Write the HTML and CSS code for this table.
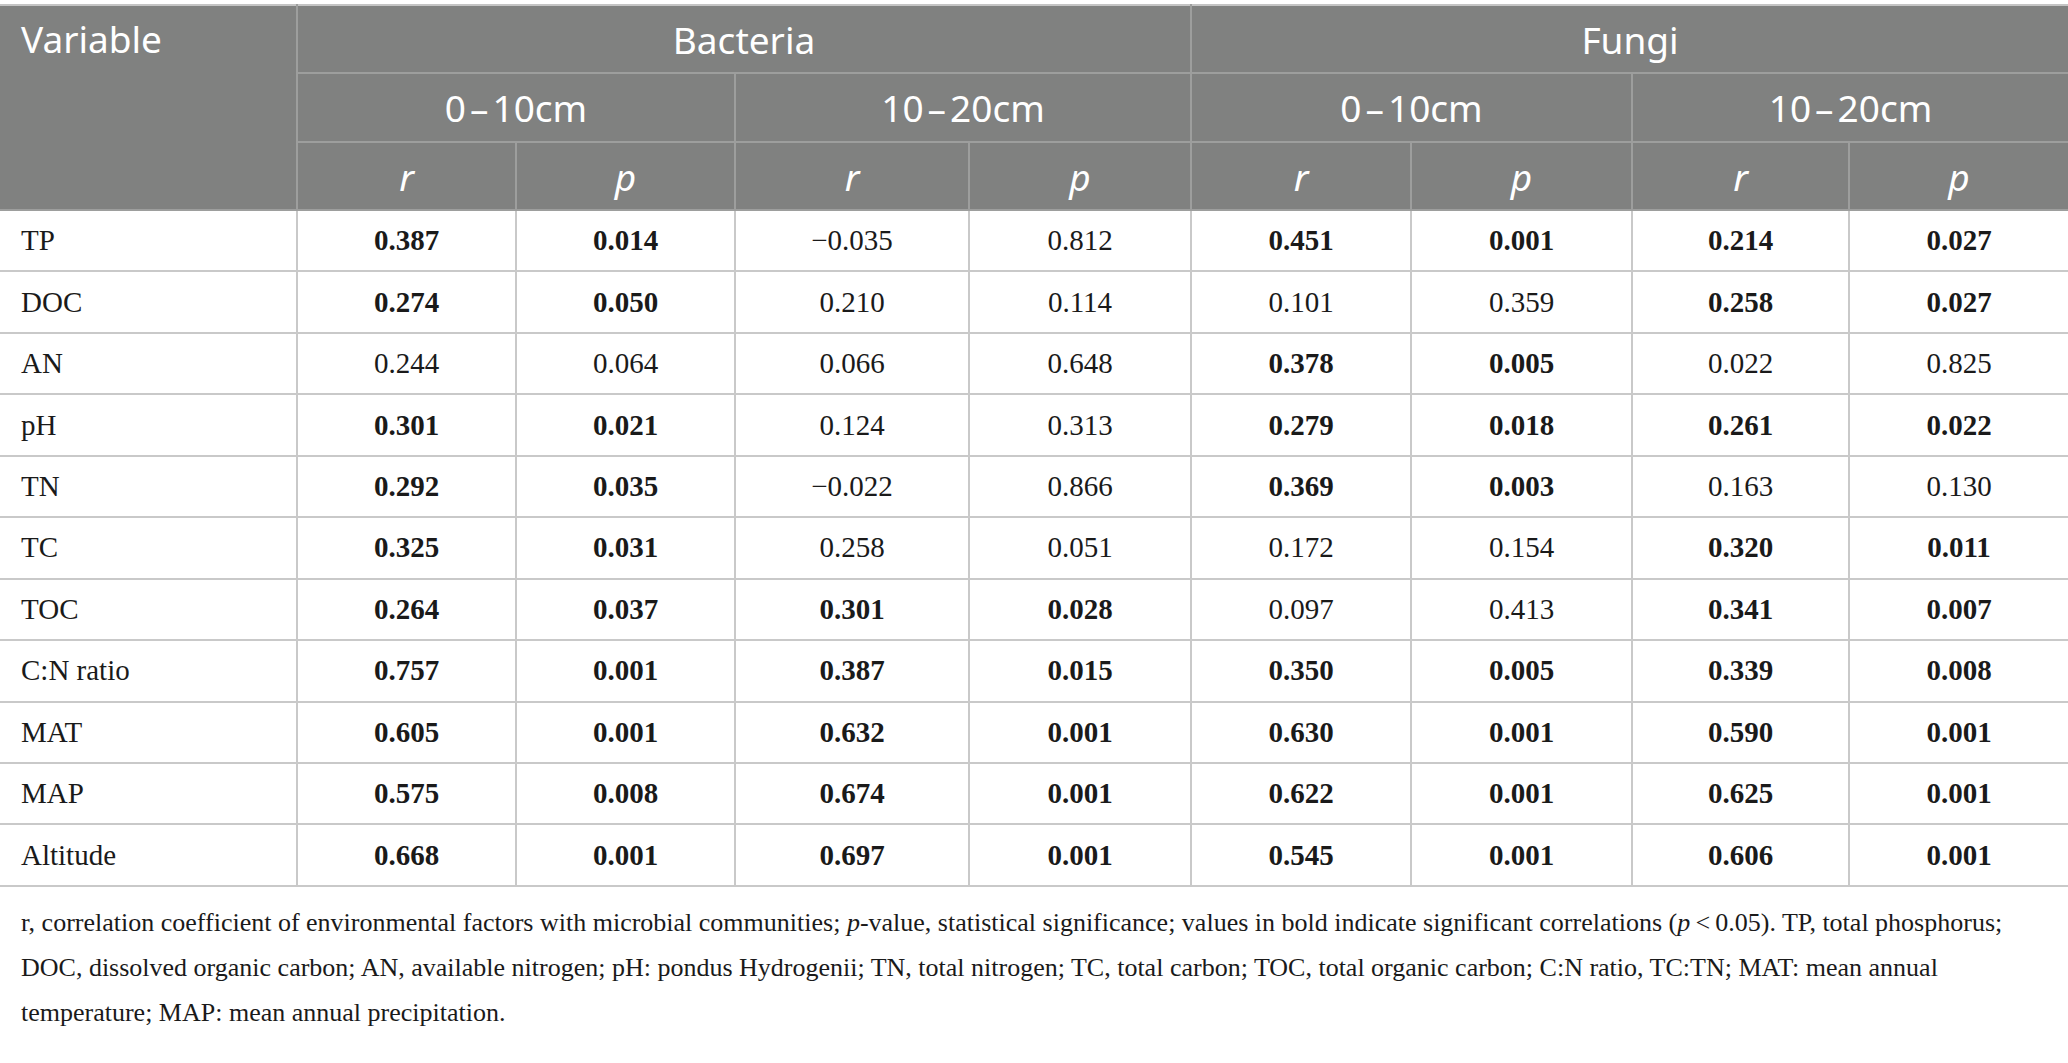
FILE: index.html
```html
<!DOCTYPE html>
<html lang="en">
<head>
<meta charset="utf-8">
<title>Correlation table</title>
<link rel="stylesheet" href="styles.css">
</head>
<body>
<div class="page">
<table class="corr">
  <colgroup>
    <col class="c-var">
    <col class="c1"><col class="c2"><col class="c3"><col class="c4">
    <col class="c5"><col class="c6"><col class="c7"><col class="c8">
  </colgroup>
  <thead>
    <tr class="h1">
      <th rowspan="3" class="var">Variable</th>
      <th colspan="4">Bacteria</th>
      <th colspan="4">Fungi</th>
    </tr>
    <tr class="h2">
      <th colspan="2">0<span class="dash">–</span>10cm</th>
      <th colspan="2">10<span class="dash">–</span>20cm</th>
      <th colspan="2">0<span class="dash">–</span>10cm</th>
      <th colspan="2">10<span class="dash">–</span>20cm</th>
    </tr>
    <tr class="h3">
      <th><i>r</i></th><th><i>p</i></th>
      <th><i>r</i></th><th><i>p</i></th>
      <th><i>r</i></th><th><i>p</i></th>
      <th><i>r</i></th><th><i>p</i></th>
    </tr>
  </thead>
  <tbody>
    <tr><td>TP</td><td><b>0.387</b></td><td><b>0.014</b></td><td>−0.035</td><td>0.812</td><td><b>0.451</b></td><td><b>0.001</b></td><td><b>0.214</b></td><td><b>0.027</b></td></tr>
    <tr><td>DOC</td><td><b>0.274</b></td><td><b>0.050</b></td><td>0.210</td><td>0.114</td><td>0.101</td><td>0.359</td><td><b>0.258</b></td><td><b>0.027</b></td></tr>
    <tr><td>AN</td><td>0.244</td><td>0.064</td><td>0.066</td><td>0.648</td><td><b>0.378</b></td><td><b>0.005</b></td><td>0.022</td><td>0.825</td></tr>
    <tr><td>pH</td><td><b>0.301</b></td><td><b>0.021</b></td><td>0.124</td><td>0.313</td><td><b>0.279</b></td><td><b>0.018</b></td><td><b>0.261</b></td><td><b>0.022</b></td></tr>
    <tr><td>TN</td><td><b>0.292</b></td><td><b>0.035</b></td><td>−0.022</td><td>0.866</td><td><b>0.369</b></td><td><b>0.003</b></td><td>0.163</td><td>0.130</td></tr>
    <tr><td>TC</td><td><b>0.325</b></td><td><b>0.031</b></td><td>0.258</td><td>0.051</td><td>0.172</td><td>0.154</td><td><b>0.320</b></td><td><b>0.011</b></td></tr>
    <tr><td>TOC</td><td><b>0.264</b></td><td><b>0.037</b></td><td><b>0.301</b></td><td><b>0.028</b></td><td>0.097</td><td>0.413</td><td><b>0.341</b></td><td><b>0.007</b></td></tr>
    <tr><td>C:N ratio</td><td><b>0.757</b></td><td><b>0.001</b></td><td><b>0.387</b></td><td><b>0.015</b></td><td><b>0.350</b></td><td><b>0.005</b></td><td><b>0.339</b></td><td><b>0.008</b></td></tr>
    <tr><td>MAT</td><td><b>0.605</b></td><td><b>0.001</b></td><td><b>0.632</b></td><td><b>0.001</b></td><td><b>0.630</b></td><td><b>0.001</b></td><td><b>0.590</b></td><td><b>0.001</b></td></tr>
    <tr><td>MAP</td><td><b>0.575</b></td><td><b>0.008</b></td><td><b>0.674</b></td><td><b>0.001</b></td><td><b>0.622</b></td><td><b>0.001</b></td><td><b>0.625</b></td><td><b>0.001</b></td></tr>
    <tr><td>Altitude</td><td><b>0.668</b></td><td><b>0.001</b></td><td><b>0.697</b></td><td><b>0.001</b></td><td><b>0.545</b></td><td><b>0.001</b></td><td><b>0.606</b></td><td><b>0.001</b></td></tr>
  </tbody>
</table>
<p class="caption">r, correlation coefficient of environmental factors with microbial communities; <i>p</i>-value, statistical significance; values in bold indicate significant correlations (<i>p</i>&thinsp;&lt;&thinsp;0.05). TP, total phosphorus; DOC, dissolved organic carbon; AN, available nitrogen; pH: pondus Hydrogenii; TN, total nitrogen; TC, total carbon; TOC, total organic carbon; C:N ratio, TC:TN; MAT: mean annual temperature; MAP: mean annual precipitation.</p>
</div>
</body>
</html>
```

FILE: styles.css
```css
html, body {
  margin: 0;
  padding: 0;
  background: #ffffff;
}

.page {
  padding-top: 4px;
  width: 2068px;
}

.corr {
  width: 2068px;
  table-layout: fixed;
  border-collapse: collapse;
  border-top: 2px solid #c4c4c4;
}

.c-var { width: 297px; }
.c1 { width: 219px; }
.c2 { width: 219px; }
.c3 { width: 234px; }
.c4 { width: 222px; }
.c5 { width: 220px; }
.c6 { width: 221px; }
.c7 { width: 217px; }
.c8 { width: 219px; }

.corr th {
  background: #808180;
  color: #ffffff;
  font-family: "Noto Sans", "Open Sans", sans-serif;
  font-weight: 400;
  font-size: 37px;
  text-align: center;
  vertical-align: middle;
  padding: 0;
  border: 2px solid #9d9e9d;
  border-top: none;
}

.corr th i {
  font-style: italic;
}

.corr th .dash {
  margin: 0 4px;
}

.corr th.var {
  text-align: left;
  vertical-align: top;
  padding: 7px 0 0 21px;
  border-left: none;
}

.corr tr.h1 { height: 68px; }
.corr tr.h2 { height: 69px; }
.corr tr.h3 { height: 68px; }

.corr td {
  font-family: "Liberation Serif", "Times New Roman", serif;
  font-size: 29px;
  color: #1a1a1a;
  text-align: center;
  vertical-align: middle;
  padding: 0;
  border: 2px solid #c9c9c9;
}

.corr tbody tr { height: 61.45px; }

.corr td:first-child {
  text-align: left;
  padding-left: 21px;
  border-left: none;
}

.corr th:last-child,
.corr td:last-child {
  border-right: none;
}

.corr td b {
  font-weight: 700;
}

.caption {
  margin: 13px 0 0 0;
  padding: 0 50px 0 21px;
  font-family: "Liberation Serif", "Times New Roman", serif;
  font-size: 26px;
  line-height: 45px;
  color: #1a1a1a;
}
```
